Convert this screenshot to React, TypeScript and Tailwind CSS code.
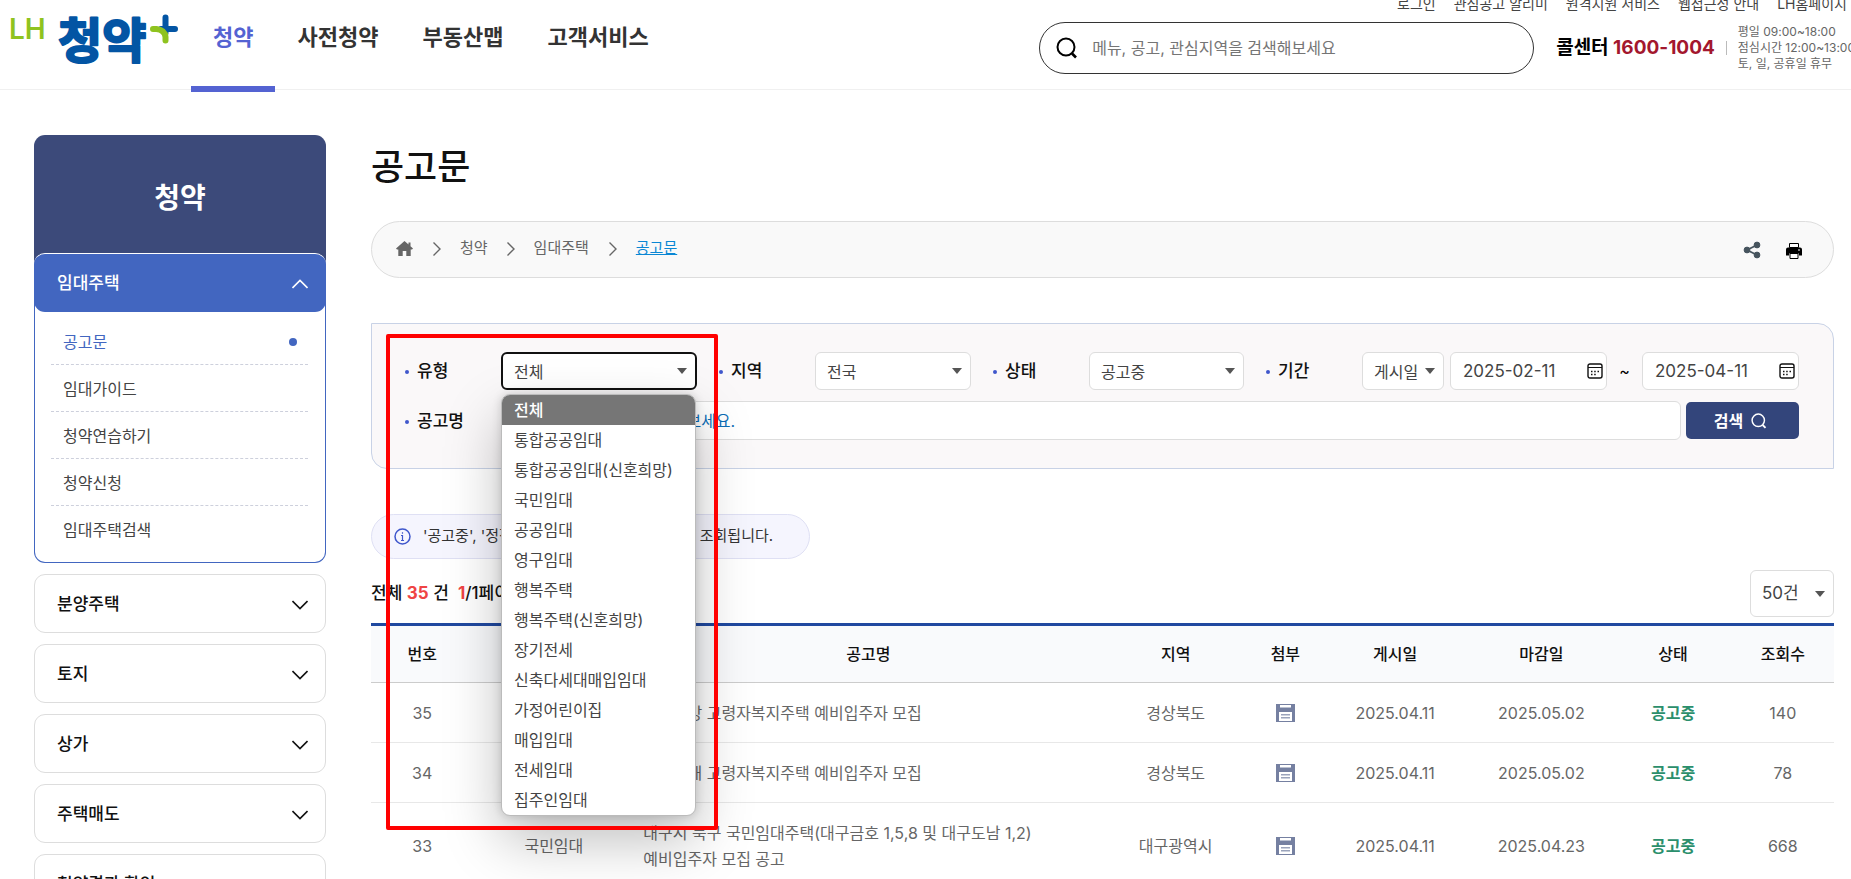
import type { ReactNode } from "react";

const navItems = ["청약", "사전청약", "부동산맵", "고객서비스"];
const utilLinks = ["로그인", "관심공고 알리미", "원격지원 서비스", "웹접근성 안내", "LH홈페이지"];
const subMenu = ["공고문", "임대가이드", "청약연습하기", "청약신청", "임대주택검색"];
const sideMenu = ["분양주택", "토지", "상가", "주택매도", "청약결과 확인"];

const types = [
  "전체",
  "통합공공임대",
  "통합공공임대(신혼희망)",
  "국민임대",
  "공공임대",
  "영구임대",
  "행복주택",
  "행복주택(신혼희망)",
  "장기전세",
  "신축다세대매입임대",
  "가정어린이집",
  "매입임대",
  "전세임대",
  "집주인임대",
];

const columns = [
  { label: "번호", width: "w-[7%]" },
  { label: "유형", width: "w-[11%]" },
  { label: "공고명", width: "w-[32%]" },
  { label: "지역", width: "w-[10%]" },
  { label: "첨부", width: "w-[5%]" },
  { label: "게시일", width: "w-[10%]" },
  { label: "마감일", width: "w-[10%]" },
  { label: "상태", width: "w-[8%]" },
  { label: "조회수", width: "w-[7%]" },
];

const notices = [
  { no: 35, type: "영구임대", title: ["경주안강 고령자복지주택 예비입주자 모집"], region: "경상북도", posted: "2025.04.11", due: "2025.05.02", status: "공고중", views: 140 },
  { no: 34, type: "영구임대", title: ["포항동해 고령자복지주택 예비입주자 모집"], region: "경상북도", posted: "2025.04.11", due: "2025.05.02", status: "공고중", views: 78 },
  { no: 33, type: "국민임대", title: ["대구시 북구 국민임대주택(대구금호 1,5,8 및 대구도남 1,2)", "예비입주자 모집 공고"], region: "대구광역시", posted: "2025.04.11", due: "2025.04.23", status: "공고중", views: 668 },
];

function Chevron({ className = "", d }: { className?: string; d: string }) {
  return (
    <svg className={`shrink-0 ${className}`} viewBox="0 0 16 16" fill="none" stroke="currentColor" aria-hidden="true">
      <path d={d} />
    </svg>
  );
}

function SearchIcon({ className = "" }: { className?: string }) {
  return (
    <svg className={`shrink-0 ${className}`} viewBox="0 0 22 22" fill="none" stroke="currentColor" strokeWidth="2" aria-hidden="true">
      <circle cx="10" cy="10" r="8.5" />
      <path d="M16 16.5l4 4" strokeWidth="2.6" />
    </svg>
  );
}

function CalendarIcon() {
  return (
    <svg className="h-4 w-4" viewBox="0 0 16 16" fill="none" stroke="#111" aria-hidden="true">
      <rect x="1" y="1" width="14" height="14" rx="2" strokeWidth="1.4" />
      <path d="M1 4.5h14" />
      <path d="M4 8.500h1.500M7.200 8.500h1.500M10.500 8.500H12M4 11.500h1.500M7.200 11.500h1.500" strokeWidth="1.500" />
    </svg>
  );
}

function FileIcon() {
  return (
    <svg className="mx-auto" width="19" height="18" viewBox="0 0 19 18" aria-hidden="true">
      <path fill="#7580a1" d="M0 0h19v18H0z" />
      <path fill="#fff" d="M4 1h11v2.500H4zM3 8h13v9H3z" />
      <path fill="#9aa3bb" d="M5 10h9v1.500H5zM5 13h9v1.500H5z" />
    </svg>
  );
}

function Logo() {
  return (
    <a href="#" aria-label="LH 청약플러스" className="mt-[13px] ml-[10px] block h-[54px] w-[181px] shrink-0">
      <svg width="172" height="54" viewBox="0 0 172 54">
        <text x="-1" y="26" fontSize="28" fontWeight="600" fill="#8fc31f" style={{ fontFamily: "Inter, sans-serif" }}>LH</text>
        <text x="48" y="45" fontSize="48" fontWeight="700" fill="#0355a4" stroke="#0355a4" strokeWidth="2.2" strokeLinejoin="round" style={{ fontFamily: '"Noto Sans CJK KR", sans-serif' }}>청약</text>
        <path d="M155.500 4.500V20M151 16h14" fill="none" stroke="#0355a4" strokeWidth="6" strokeLinecap="round" />
        <path d="M143 16h3.500q8.500 1 9 8v3.500" fill="none" stroke="#8fc31f" strokeWidth="6" strokeLinecap="round" strokeLinejoin="round" />
      </svg>
    </a>
  );
}

function Header() {
  return (
    <header className="flex h-[90px] border-b border-[#f0f0f0]">
      <Logo />
      <nav className="flex">
        {navItems.map((item, i) => (
          <a
            key={item}
            href="#"
            className={`-mb-[3px] flex items-center border-b-[6px] px-[22px] pb-[11px] text-[22px] font-bold whitespace-nowrap ${i === 0 ? "border-[#5463d2] text-[#5463d2]" : "border-transparent text-[#333]"}`}
          >
            {item}
          </a>
        ))}
      </nav>
      <div className="-mt-1.5 -mr-1 ml-auto shrink-0">
        <ul className="flex h-5 items-center justify-end gap-[18px] pr-2 text-sm whitespace-nowrap text-[#444]">
          {utilLinks.map((link) => (
            <li key={link}><a href="#">{link}</a></li>
          ))}
        </ul>
        <div className="mt-2 flex items-center">
          <label className="flex h-[52px] w-[495px] items-center gap-[14px] rounded-full border border-[#333] px-4">
            <SearchIcon className="h-[22px] w-[22px] text-black" />
            <input type="text" aria-label="통합검색" placeholder="메뉴, 공고, 관심지역을 검색해보세요" className="min-w-0 flex-1 outline-none placeholder:text-[#757575]" />
          </label>
          <p className="ml-[22px] text-[19px] font-bold whitespace-nowrap text-black">
            콜센터 <span className="text-[#a3172e]">1600-1004</span>
          </p>
          <span className="mx-[11px] h-[14px] w-px bg-[#bbb]" />
          <p className="text-xs leading-4 whitespace-nowrap text-[#666]">
            평일 09:00~18:00<br />점심시간 12:00~13:00<br />토, 일, 공휴일 휴무
          </p>
        </div>
      </div>
    </header>
  );
}

function Sidebar() {
  return (
    <aside className="w-[292px] shrink-0">
      <div className="rounded-t-[11px] bg-[#3c4a7a]">
        <h2 className="flex h-[118px] items-center justify-center pt-2 text-[28px] font-bold text-white">청약</h2>
      </div>
      {/* the dark head shows through behind the rounded top corners only */}
      <div className="bg-linear-to-b from-[#3c4a7a] from-50% to-transparent to-50%">
        <button type="button" className="flex h-[59px] w-full items-center justify-between rounded-[11px] border-t border-white bg-[#4266c0] pt-0.5 pr-[18px] pl-[23px] text-[17px] font-medium text-white">
          임대주택
          <Chevron className="h-4 w-4 stroke-[1.6]" d="M0.500 12L8 4.500L15.500 12" />
        </button>
      </div>
      <ul className="-mt-[11px] rounded-b-[11px] border border-t-0 border-[#4266c0] pt-[17px] pr-[17px] pb-[10px] pl-4">
        {subMenu.map((item, i) => (
          <li key={item} className="border-b border-dashed border-[#cdd0dc] last:border-b-0">
            <a href="#" className={`flex h-[46px] items-center justify-between pt-px pr-[11px] pl-3 ${i === 0 ? "text-[#4266c0]" : "text-[#444]"}`}>
              {item}
              {i === 0 && <span className="h-2 w-2 rounded-full bg-[#4266c0]" />}
            </a>
          </li>
        ))}
      </ul>
      <ul className="mt-[11px] space-y-[11px]">
        {sideMenu.map((item) => (
          <li key={item}>
            <button type="button" className="flex h-[59px] w-full items-center justify-between rounded-[11px] border border-[#ddd] pt-0.5 pr-[17px] pl-[22px] text-[17px] font-medium text-[#111]">
              {item}
              <Chevron className="h-4 w-4 stroke-[1.6]" d="M0.500 4L8 11.500L15.500 4" />
            </button>
          </li>
        ))}
      </ul>
    </aside>
  );
}

function Breadcrumb() {
  const arrow = <Chevron className="h-4 w-4 text-[#666] stroke-[1.4]" d="M4.500 1.500L11 8L4.500 14.500" />;
  return (
    <div className="mt-8 flex h-[57px] items-center justify-between rounded-full border border-[#ddd] bg-[#f9f9f9] pr-[31px] pl-6">
      <nav className="flex items-center pb-0.5 text-[15px] text-[#666]">
        <a href="#" aria-label="홈" className="mr-4">
          <svg width="17" height="15" viewBox="0 0 17 15" fill="#666" aria-hidden="true">
            <path d="M8.500 0L0 7.500l1 1h1.300V15h4.400v-5h3.600v5h4.400V8.500H16l1-1-2.500-2.300V1.500h-2v1.900z" />
          </svg>
        </a>
        {arrow}
        <a href="#" className="mr-[15px] ml-[15px]">청약</a>
        {arrow}
        <a href="#" className="mr-4 ml-[15px]">임대주택</a>
        {arrow}
        <a href="#" className="ml-[15px] text-[#0a87d4] underline">공고문</a>
      </nav>
      <div className="flex items-center gap-[25px]">
        <button type="button" aria-label="공유">
          <svg width="18" height="18" viewBox="0 0 18 18" fill="#46545e" stroke="#46545e" aria-hidden="true">
            <path d="M14 4L4 9l10 5" fill="none" strokeWidth="1.800" />
            <circle cx="14" cy="4" r="2.900" />
            <circle cx="4" cy="9" r="2.900" />
            <circle cx="14" cy="14" r="2.900" />
          </svg>
        </button>
        <button type="button" aria-label="인쇄" className="pt-0.5">
          <svg width="16" height="16" viewBox="0 0 16 16" aria-hidden="true">
            <path d="M3.500.500h9v4h-9z" fill="#fff" stroke="#000" />
            <path d="M2 4.500h12a2 2 0 0 1 2 2v6h-3v-2H3v2H0v-6a2 2 0 0 1 2-2z" />
            <path d="M4 10.500h8v5H4z" fill="#fff" stroke="#000" />
            <path d="M12 6.500h2v1h-2z" fill="#fff" />
          </svg>
        </button>
      </div>
    </div>
  );
}

interface SelectProps {
  id: string;
  value: string;
  options?: string[];
  className: string;
  children?: ReactNode;
}

function Select({ id, value, options = [value], className, children }: SelectProps) {
  return (
    <div className={`relative shrink-0 ${className}`}>
      <select id={id} aria-label={id} defaultValue={value} className="h-full w-full appearance-none rounded-[inherit] bg-transparent pt-px pr-6 pl-[11px] text-[#444] outline-none">
        {options.map((option) => (
          <option key={option}>{option}</option>
        ))}
      </select>
      <svg className="pointer-events-none absolute top-1/2 right-2 -mt-[3px]" width="10" height="6" viewBox="0 0 10 6" aria-hidden="true">
        <path d="M0 0h10L5 6z" fill="#555" />
      </svg>
      {children}
    </div>
  );
}

function FieldLabel({ htmlFor, children }: { htmlFor: string; children: ReactNode }) {
  return (
    <label htmlFor={htmlFor} className="flex w-24 shrink-0 items-center gap-2 pt-0.5 text-[17px] font-medium text-[#111]">
      <span className="h-1 w-1 rounded-full bg-[#3f57cc]" />
      {children}
    </label>
  );
}

function DateField({ label, value }: { label: string; value: string }) {
  return (
    <div className="flex h-[38px] min-w-0 flex-1 items-center rounded-md border border-[#ddd] bg-white pr-[3px] pl-3">
      <input type="text" aria-label={label} defaultValue={value} className="w-0 min-w-0 flex-1 pt-px text-[17px] text-[#444] outline-none" />
      <button type="button" aria-label={`${label} 선택`}><CalendarIcon /></button>
    </div>
  );
}

function TypeMenu() {
  return (
    <ul role="listbox" aria-label="유형 목록" className="absolute top-10 -left-0.5 z-10 w-[195px] overflow-hidden rounded-[9px] border border-[#bbb] bg-white text-[#444] shadow-[0_0_10px_rgba(0,0,0,0.16),0_24px_56px_rgba(0,0,0,0.26)]">
      {types.map((type, i) => (
        <li key={type} role="option" aria-selected={i === 0} className={`flex h-[30px] items-center pl-3 whitespace-nowrap ${i === 0 ? "bg-[#767676] font-medium text-white" : ""}`}>
          {type}
        </li>
      ))}
    </ul>
  );
}

function SearchPanel() {
  return (
    <form className="relative mt-[45px] rounded-tr-2xl rounded-bl-2xl border border-[#c8d2e6] bg-[#faf8f9] py-7 pr-[34px] pl-[33px]">
      <div className="flex gap-[22px]">
        <div className="flex">
          <FieldLabel htmlFor="type">유형</FieldLabel>
          <Select id="type" value="전체" options={types} className="h-[38px] w-[196px] rounded-md border-2 border-[#111] bg-white">
            <TypeMenu />
          </Select>
        </div>
        <div className="flex">
          <FieldLabel htmlFor="region">지역</FieldLabel>
          <Select id="region" value="전국" className="h-[38px] w-[156px] rounded-md border border-[#ddd] bg-white" />
        </div>
        <div className="flex">
          <FieldLabel htmlFor="status">상태</FieldLabel>
          <Select id="status" value="공고중" className="h-[38px] w-[155px] rounded-md border border-[#ddd] bg-white" />
        </div>
        <div className="flex min-w-0 flex-1">
          <FieldLabel htmlFor="period">기간</FieldLabel>
          <Select id="period" value="게시일" className="mr-1.5 h-[38px] w-[82px] rounded-md border border-[#ddd] bg-white" />
          <DateField label="시작일" value="2025-02-11" />
          <span className="w-[35px] text-center leading-[38px] text-black">~</span>
          <DateField label="종료일" value="2025-04-11" />
        </div>
      </div>
      <div className="mt-[11px] flex items-center">
        <FieldLabel htmlFor="keyword">공고명</FieldLabel>
        <input id="keyword" type="text" placeholder="검색할 공고명을 입력하여 보세요." className="h-[39px] min-w-0 flex-1 rounded-md border border-[#ddd] bg-white px-[9px] outline-none placeholder:text-[#0b6cb5]" />
        <button type="button" className="ml-[5px] flex h-[37px] w-[113px] items-center justify-center gap-2 rounded-[5px] bg-[#33457b] pr-1 font-bold text-white">
          검색
          <SearchIcon className="h-4 w-4" />
        </button>
      </div>
      <div className="pointer-events-none absolute top-[10px] left-[14px] z-20 h-[496px] w-[332px] rounded-[2px] border-4 border-[#ff0000]" />
    </form>
  );
}

function NoticeTable() {
  return (
    <table className="mt-1.5 w-full table-fixed border-separate border-spacing-0 border-t-[3px] border-[#2049a0] text-center">
      <thead>
        <tr>
          {columns.map(({ label, width }) => (
            <th key={label} className={`h-[57px] border-b border-[#ccc] bg-[#f9fafc] font-medium text-[#111] ${width}`}>{label}</th>
          ))}
        </tr>
      </thead>
      <tbody className="leading-[26px] text-[#666] [&_td]:border-b [&_td]:border-[#e8e8e8] [&_td]:pt-[17px] [&_td]:pb-4">
        {notices.map((notice) => (
          <tr key={notice.no}>
            <td>{notice.no}</td>
            <td>{notice.type}</td>
            <td className="pl-[9px] text-left whitespace-nowrap">
              <a href="#">
                {notice.title.map((line) => (
                  <span key={line} className="block">{line}</span>
                ))}
              </a>
            </td>
            <td>{notice.region}</td>
            <td><button type="button" aria-label="첨부파일" className="block w-full"><FileIcon /></button></td>
            <td>{notice.posted}</td>
            <td>{notice.due}</td>
            <td className="font-bold text-[#2b8f6c]">{notice.status}</td>
            <td>{notice.views}</td>
          </tr>
        ))}
      </tbody>
    </table>
  );
}

export default function App() {
  return (
    <div className="h-screen overflow-hidden bg-white font-[Inter,'Noto_Sans_CJK_KR',sans-serif] text-base">
      <Header />
      <div className="flex gap-[45px] pt-[45px] pr-[17px] pl-[34px]">
        <Sidebar />
        <main className="min-w-0 flex-1 pt-[10px]">
          <h1 className="text-4xl leading-[44px] font-medium text-[#111]">공고문</h1>
          <Breadcrumb />
          <SearchPanel />
          <p className="mt-[45px] flex h-[45px] w-fit items-center gap-3 rounded-full border border-[#dfe0f4] bg-[#f5f5fe] pr-9 pl-[22px] text-[15px] whitespace-nowrap text-[#333]">
            <svg width="17" height="17" viewBox="0 0 17 17" fill="none" stroke="#3f57cc" aria-hidden="true">
              <circle cx="8.500" cy="8.500" r="7.500" strokeWidth="1.500" />
              <path d="M8.500 4.200v1.600M7 7.500h1.500v5M7 12.500h3" strokeWidth="1.200" />
            </svg>
            '공고중', '정정공고중' 상태의 공고문이 모두 조회됩니다.
          </p>
          <div className="mt-[11px] flex items-center justify-between">
            <p className="text-[17px] font-medium text-[#111]">
              전체 <strong className="text-[#ef4444]">35</strong> 건 &nbsp;<strong className="text-[#ef4444]">1</strong>/1페이지
            </p>
            <Select id="pageSize" value="50건" className="h-[47px] w-[84px] rounded-md border border-[#ddd] bg-white text-[17px]" />
          </div>
          <NoticeTable />
        </main>
      </div>
    </div>
  );
}
